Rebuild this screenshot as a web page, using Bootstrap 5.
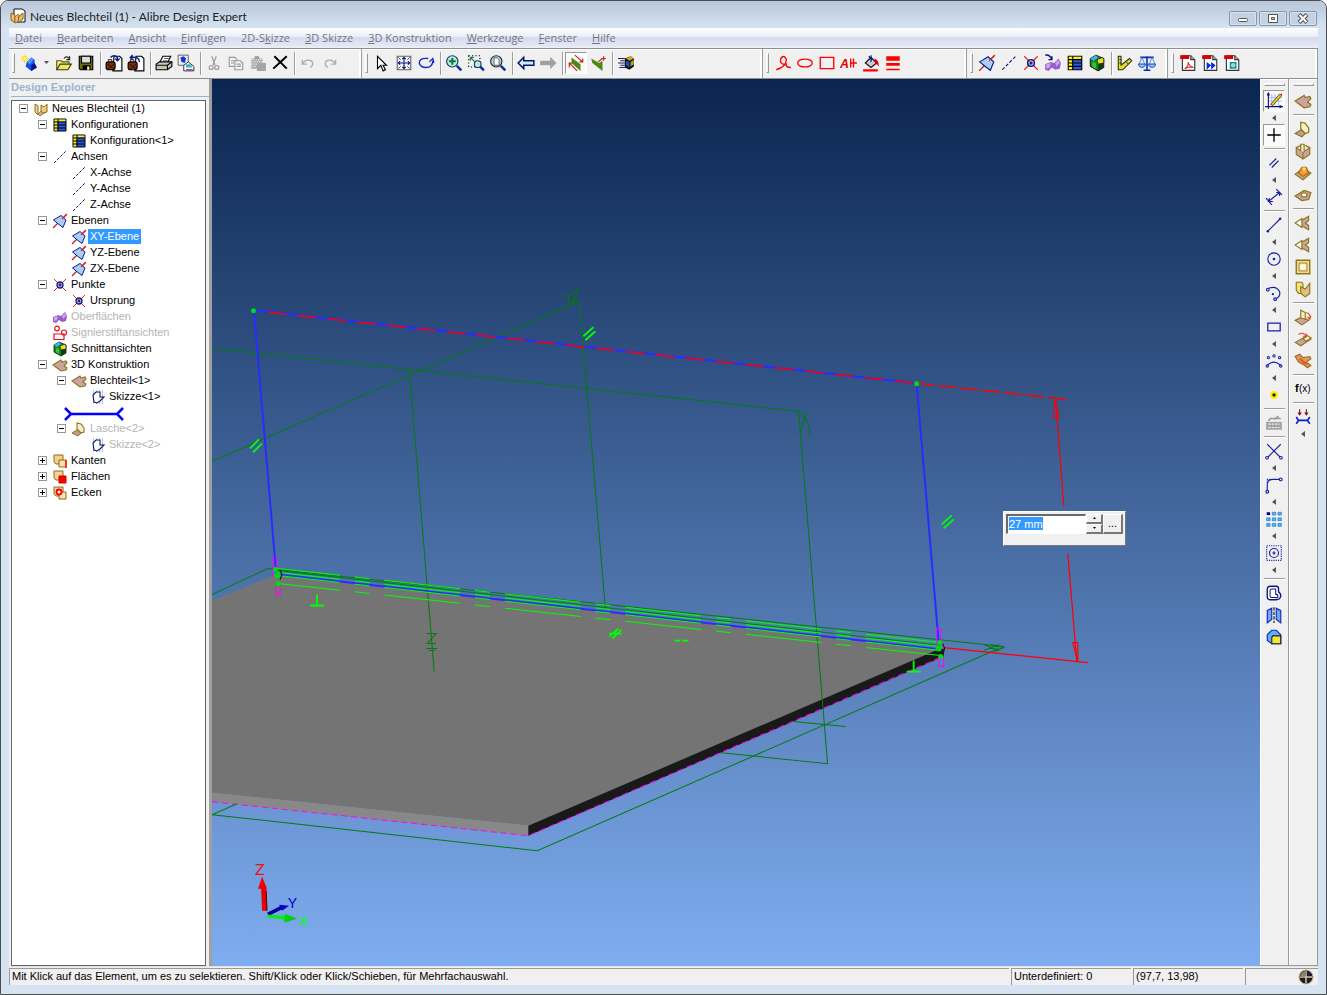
<!DOCTYPE html>
<html lang="de">
<head>
<meta charset="utf-8">
<meta name="viewport" content="width=device-width, initial-scale=1">
<title>Neues Blechteil (1) - Alibre Design Expert</title>
<link href="https://cdn.jsdelivr.net/npm/bootstrap@5.3.0/dist/css/bootstrap.min.css" rel="stylesheet">
<style>
  body { background: #fff; color: #000; font: 11px/16px "Liberation Sans", sans-serif; }
  .window { border: 1px solid #4a4c55; border-radius: 8px 8px 0 0; background: #d6e3f2; padding: 0 8px 9px; overflow: hidden; }
  .titlebar { height: 27px; margin: 0 -8px; padding: 6px 9px 0 9px; gap: 4px; background: linear-gradient(#b8c6d9, #c6d5e5 50%, #d6e3f1); font: 12px/20px Lato, "Open Sans", sans-serif; color: #222; }
  .titlebar > svg { width: 16px; height: 18px; }
  .caption { width: 28px; height: 15px; padding: 0; border: 1px solid #8494ac; border-radius: 2px; background: #c4d1e1; box-shadow: inset 0 0 0 1px #d8e3ef; }
  .caption svg { display: block; margin: auto; width: 14px; height: 11px; }
  .menubar { height: 20px; padding-left: 6px; gap: 15px; background: linear-gradient(#fff, #eceff7 40%, #d5dbef 50%, #e3e8f5 90%, #f0f0f0); font: 11px/20px "Open Sans", sans-serif; }
  .menubar a { color: #74767c; text-decoration: none; }
  .toolbars { height: 31px; background: #f0f0f0; border-top: 1px solid #8e8e8e; border-bottom: 1px solid #8e8e8e; box-shadow: inset 0 1px #fff; }
  .band { padding: 3px 0 3px 9px; border-right: 1px solid #9a9a9a; box-shadow: inset -2px 0 #fff; position: relative; }
  .band::before { content: ""; position: absolute; left: 3px; top: 4px; bottom: 5px; width: 3px; border: 1px solid #fff; border-right-color: #999; border-bottom-color: #999; }
  .tb { width: 22px; height: 22px; padding: 0; border: 0; border-radius: 0; background: none; display: flex; align-items: center; justify-content: center; flex: none; }
  .tb svg { width: 18px; height: 18px; }
  .tb.pressed { background: #fafafa; border: 1px solid #999; border-right-color: #fff; border-bottom-color: #fff; }
  .drop { width: 13px; height: 22px; padding: 0; border: 0; background: none; display: flex; align-items: center; justify-content: center; }
  .drop svg { width: 5px; height: 4px; }
  .divide { width: 6px; flex: none; background: linear-gradient(90deg, transparent 3px, #9c9c9c 3px 4px, #fff 4px 5px, transparent 5px); }
  .explorer { width: 200px; background: #f0f0f0; padding-left: 2px; flex: none; }
  .explorer h2 { margin: 0; width: 198px; height: 18px; font: bold 11px/17px "Liberation Sans", sans-serif; color: #99b4d1; border-bottom: 1px solid #99b4d1; }
  .tree { margin-top: 3px; width: 195px; background: #fff; border: 1px solid #646464; flex: 1; padding-left: 7px; }
  .tree ul { padding-left: 19px; }
  .node { height: 16px; display: flex; align-items: center; white-space: nowrap; }
  .node > svg { width: 18px; height: 16px; margin-left: 4px; flex: none; }
  .node > span { padding: 0 2px; line-height: 15px; height: 15px; }
  .node.off > span { color: #b4b4b4; }
  .node.sel > span { background: #3399ff; color: #fff; }
  .node > i { width: 9px; flex: none; }
  .twist { width: 9px; height: 9px; border: 1px solid #969696; background: linear-gradient(#000, #000) 50% 50% / 5px 1px no-repeat #fff; padding: 0; flex: none; }
  .twist.plus { background: linear-gradient(#000, #000) 50% 50% / 5px 1px no-repeat, linear-gradient(#000, #000) 50% 50% / 1px 5px no-repeat #fff; }
  .splitter { width: 3px; background: #a0a0a0; flex: none; }
  .scene { background: linear-gradient(#0a254f, #80adf0); }
  .scene svg { display: block; }
  .sidebar { width: 29px; background: #f0f0f0; border-right: 1px solid #9a9a9a; border-bottom: 1px solid #9a9a9a; box-shadow: inset 1px 1px #fff; padding-top: 11px; position: relative; flex: none; }
  .sidebar::before { content: ""; position: absolute; left: 4px; right: 3px; top: 4px; height: 3px; border: 1px solid #fff; border-right-color: #999; border-bottom-color: #999; }
  .sidebar .divide { width: 21px; height: 6px; background: linear-gradient(transparent 2px, #9c9c9c 2px 3px, #fff 3px 4px, transparent 4px); }
  .sidebar .drop { width: 22px; height: 12px; }
  .sidebar .drop svg { width: 4px; height: 6px; }
  .dimbox { position: absolute; left: 791px; top: 432px; width: 123px; height: 35px; background: #f0f0f0; border: 1px solid #fff; border-right-color: #777; border-bottom-color: #777; padding: 2px; }
  .dimbox input { width: 80px; height: 20px; border: 1px solid #fff; border-top: 2px solid #696969; border-left: 2px solid #696969; padding: 0 0 0 1px; color: #fff; background: linear-gradient(#3399ff, #3399ff) 1px 1px / 34px 13px no-repeat #fff; font-size: 11px; line-height: 14px; border-radius: 0; }
  .bevel { padding: 0; border: 1px solid #fff; border-right: 2px solid #777; border-bottom: 2px solid #777; background: #f0f0f0; font-size: 11px; line-height: 14px; }
  .spin .bevel { width: 17px; height: 10px; display: flex; align-items: center; justify-content: center; }
  .status { height: 19px; background: #f0f0f0; gap: 2px; padding-top: 1px; border-top: 1px solid #e3e3e3; }
  .pane { border-left: 1px solid #999; border-top: 1px solid #999; padding-left: 2px; line-height: 15px; }
</style>
</head>
<body>
<svg width="0" height="0" class="position-absolute" aria-hidden="true">
  <defs>
  <symbol id="app" viewBox="0 0 16 16"><path d="M4 1h8l3 2v11H6L4 12z" fill="#fff" stroke="#111"/><path d="M1 5l4 2v8l-4-3z" fill="#e8c070" stroke="#8a6418"/><path d="M5 15V9l3-3 1 2v5z" fill="#f3b48c" stroke="#a0601c" stroke-width=".8"/><path d="M9 8l4-3v6l-5 4z" fill="#e9bd66" stroke="#8a6418"/></symbol>
  <symbol id="part" viewBox="0 0 16 16"><path d="M2 3l3 2v9l-3-3z" fill="#f3d590" stroke="#8a6d14"/><path d="M5 13l4-4 4 2-6 4z" fill="#c9a2a2" stroke="#8a6d14" stroke-width=".7"/><path d="M8 4l3 2 3-3v8l-4 1-2-2z" fill="#f3c880" stroke="#8a6d14"/></symbol>
  <symbol id="new" viewBox="0 0 16 16"><path d="M6 7l4-4 3 2v4l2 3-5 3-5-4z" fill="#1450e8"/><path d="M6 7l4-4 2 2-3 4z" fill="#4c96ff"/><path d="M10 10l3-2 2 4-5 3z" fill="#08108c"/><path d="M4 1v7M1 4h7M2 2l4 4M6 2L2 6" stroke="#f5e100"/><circle cx="4" cy="4" r="1.2" fill="#fff79a"/></symbol>
  <symbol id="open" viewBox="0 0 16 16"><path d="M1.500 14V6h4l1 1h6v2" fill="#f7ee8a" stroke="#5b5b08"/><path d="M1.500 14l3-5h10l-3 5z" fill="#eee468" stroke="#3b3b00"/><path d="M8 4q2-3 5 0m0-2v3h-3" fill="none" stroke="#222"/></symbol>
  <symbol id="save" viewBox="0 0 16 16"><path d="M2 2h12v12H3l-1-1z" fill="#6e6a10" stroke="#000"/><path d="M4 2h8v6H4z" fill="#ddd" stroke="#000"/><path d="M5 10h7v4H5z" fill="#000"/><path d="M9 11h2v3H9z" fill="#eee"/></symbol>
  <symbol id="pkgin" viewBox="0 0 16 16"><path d="M8 2h5l2 2v11H7z" fill="#fff" stroke="#000"/><rect x="1" y="7" width="8" height="7" rx="2" fill="#7c2d12" stroke="#000"/><path d="M3 7V5h3v2M2 9l6 4M8 9l-5 4" fill="none" stroke="#2a0c00" stroke-width=".8"/><path d="M5 3q3-3 6 0v3m-2-2l2 2 2-2" fill="none" stroke="#0a1a9c" stroke-width="1.300"/></symbol>
  <symbol id="pkgout" viewBox="0 0 16 16"><path d="M8 2h5l2 2v11H7z" fill="#fff" stroke="#000"/><rect x="1" y="7" width="8" height="7" rx="2" fill="#7c2d12" stroke="#000"/><path d="M3 7V5h3v2M2 9l6 4M8 9l-5 4" fill="none" stroke="#2a0c00" stroke-width=".8"/><path d="M11 7q0-5-8-4m2-2L3 3l2 2" fill="none" stroke="#0a1a9c" stroke-width="1.300"/></symbol>
  <symbol id="print" viewBox="0 0 16 16"><path d="M4 8l3-6h7l-3 6" fill="#fff" stroke="#000"/><path d="M8 4h4M7 6h4" stroke="#555" stroke-width=".8"/><path d="M1 9l3-2h11v4l-4 3H1z" fill="#c9c9c9" stroke="#000"/><path d="M1 10h10v4M11 10l4-3" fill="none" stroke="#000"/><path d="M3 12h6" stroke="#d5c820"/></symbol>
  <symbol id="image" viewBox="0 0 16 16"><path d="M1 1h9v9H1z" fill="#e8f0ff" stroke="#555" stroke-width=".8"/><path d="M3 3l3-1 2 2-1 4-3-1z" fill="#1432d8"/><path d="M6 10l4-3 5 4v4H6z" fill="#fff" stroke="#222" stroke-width=".8"/><path d="M8 9h4l2 3H8z" fill="#41b2bd"/><path d="M8 14h6" stroke="#5a1aa0"/></symbol>
  <symbol id="cut" viewBox="0 0 16 16"><path d="M6 2l3 8M10 2L7 10" stroke="#999" fill="none"/><circle cx="5.500" cy="12" r="1.800" fill="none" stroke="#999"/><circle cx="10.500" cy="12" r="1.800" fill="none" stroke="#999"/></symbol>
  <symbol id="copy" viewBox="0 0 16 16"><g fill="#f4f4f4" stroke="#999"><path d="M2 3h5l2 2v6H2z"/><path d="M7 6h5l2 2v6H7z"/><path d="M3.500 6h4M3.500 8h3M8.500 9h4M8.500 11h4"/></g></symbol>
  <symbol id="paste" viewBox="0 0 16 16"><path d="M2 4h10v9H2z" fill="#aaa"/><path d="M5 2h4v3H5z" fill="#999"/><path d="M7 8h8v7H7z" fill="#a4a4a4"/><path d="M2 5h10M3 7h9M2 9h5M3 11h4" stroke="#eee" stroke-dasharray="1 1"/></symbol>
  <symbol id="del" viewBox="0 0 16 16"><path d="M3 2l11 11M14 2L2 13" stroke="#000" stroke-width="1.800"/></symbol>
  <symbol id="undo" viewBox="0 0 16 16"><path d="M3 5v4h4M3 9q3-5 8-3 3 3-1 6" fill="none" stroke="#aaa" stroke-width="1.200"/></symbol>
  <symbol id="redo" viewBox="0 0 16 16"><path d="M13 5v4H9M13 9Q10 4 5 6q-3 3 1 6" fill="none" stroke="#aaa" stroke-width="1.200"/></symbol>
  <symbol id="arrow" viewBox="0 0 16 16"><path d="M4 2v11l3-3 2 5 2-1-2-4h3z" fill="#fff" stroke="#000"/></symbol>
  <symbol id="pan" viewBox="0 0 16 16"><path d="M2 2h12v12H2z" fill="#f4f4f4" stroke="#666"/><path d="M8 3v10M3 8h10M6.500 4.500L8 3l1.500 1.500M6.500 11.500L8 13l1.500-1.500M4.500 6.500L3 8l1.500 1.500M11.500 6.500L13 8l-1.500 1.500" stroke="#0a1a8c" fill="none"/><path d="M3 3l2 2m6 6l2 2M13 3l-2 2m-6 6l-2 2" stroke="#333" stroke-width=".8"/></symbol>
  <symbol id="rotate" viewBox="0 0 16 16"><path d="M10 4Q2 3 2 8q1 4 6 4 6 0 6-6m-3 1l3-3 1 4" fill="none" stroke="#1428dc" stroke-width="1.200"/></symbol>
  <symbol id="zin" viewBox="0 0 16 16"><circle cx="6.500" cy="6.500" r="5" fill="#bfe8e4" stroke="#123c5c"/><path d="M6.500 3.500v6M3.500 6.500h6" stroke="#087840" stroke-width="1.800"/><path d="M10.500 10.500l4 4" stroke="#0a2ca0" stroke-width="2.200"/></symbol>
  <symbol id="zwin" viewBox="0 0 16 16"><path d="M1.500 1.500h10v10h-10z" fill="none" stroke="#000" stroke-dasharray="1 2"/><path d="M3 3l4 4M3 3h3M3 3v3" stroke="#0a7a3a"/><circle cx="9.500" cy="9" r="3" fill="#bfe8e4" stroke="#123c5c"/><path d="M12 11.500l3 3" stroke="#0a2ca0" stroke-width="2.200"/></symbol>
  <symbol id="zfit" viewBox="0 0 16 16"><circle cx="6.500" cy="6.500" r="5" fill="#b4ddf2" stroke="#222"/><path d="M4.500 3.500h3l1.500 1.500v5H4.500z" fill="#fff" stroke="#555" stroke-width=".8"/><path d="M10.500 10.500l4 4" stroke="#0a2ca0" stroke-width="2.200"/></symbol>
  <symbol id="back" viewBox="0 0 16 16"><path d="M1 8l5-5v3h9v4H6v3z" fill="#c8f0ff" stroke="#0a1466" stroke-width="1.300"/></symbol>
  <symbol id="fwd" viewBox="0 0 16 16"><path d="M15.500 8L10 2.500V6H1v4h9v3.500z" fill="#a0a0a0"/></symbol>
  <symbol id="facea" viewBox="0 0 16 16"><path d="M4 3l8 6v6L4 8z" fill="#4d8a14"/><path d="M7 1l7 6m0-3v3h-3M2 8l7 7m-7-3V8h3" stroke="#c82014" fill="none"/></symbol>
  <symbol id="faceb" viewBox="0 0 16 16"><path d="M2 4l7 4 3-2v9L3 8z" fill="#4d8a14"/><path d="M8 7l4-3M11 4h4M13 2v4" stroke="#c82014"/></symbol>
  <symbol id="shade" viewBox="0 0 16 16"><path d="M7 4l5-2 3 2v7l-4 3-4-2z" fill="#111"/><path d="M8 4l4-2 3 2-4 2z" fill="#c8a824"/><path d="M8 6l3 1v5l-3-2z" fill="#1450c8"/><path d="M12 7l3-2v4l-3 2z" fill="#a8a028"/><path d="M1 4h6M3 6h4M1 8h6M3 10h4M2 12h6" stroke="#14205c"/></symbol>
  <symbol id="pen" viewBox="0 0 16 16"><path d="M2 14q9-3 9-9Q9 0 6 4q-1 4 2 5h3q-1 3 4 3" fill="none" stroke="#f00" stroke-width="1.200"/></symbol>
  <symbol id="ell" viewBox="0 0 16 16"><ellipse cx="8" cy="8" rx="6.500" ry="3.500" fill="none" stroke="#f00" stroke-width="1.200"/></symbol>
  <symbol id="rectr" viewBox="0 0 16 16"><path d="M2 3h12v10H2z" fill="none" stroke="#f00" stroke-width="1.200"/></symbol>
  <symbol id="note" viewBox="0 0 16 16"><text x="0" y="12" font-family="Liberation Sans,sans-serif" font-weight="bold" font-style="italic" font-size="11" fill="#e00000">A</text><path d="M9.500 4v8M12 4v8M9 8h6" stroke="#f00" stroke-width="1.200"/></symbol>
  <symbol id="fill" viewBox="0 0 16 16"><path d="M3 8l5-5 5 5-5 4z" fill="#ccc" stroke="#111"/><path d="M8 1v6M6 2l3 3" stroke="#00128c"/><path d="M11 4q4 1 4 7l-3-3z" fill="#e80000"/><path d="M1 14.500h13" stroke="#f00" stroke-width="2"/></symbol>
  <symbol id="lines" viewBox="0 0 16 16"><path d="M2 2h12v4H2zM2 8h12v2.500H2zM2 13h12v1.500H2z" fill="#f00"/></symbol>
  <symbol id="plane" viewBox="0 0 16 16"><path d="M14.500 1.500L11 5M1 15l5-5" stroke="#c01818" stroke-width="1.100"/><path d="M1.500 7L9 2.500l5 4.500-3 7.500-4-3z" fill="#a8cef2" stroke="#0a1a8c"/><path d="M15 1l-5 5" stroke="#e01818" stroke-width="1.100"/></symbol>
  <symbol id="axis" viewBox="0 0 16 16"><path d="M2 14L14 2" stroke="#00006c" stroke-width=".9" stroke-dasharray="3 1.500"/></symbol>
  <symbol id="point" viewBox="0 0 16 16"><path d="M2 2l12 12M14 2L2 14" stroke="#f02020"/><circle cx="8" cy="8" r="3" fill="#a9bdf0" stroke="#0c1c8c" stroke-width="1.300"/><circle cx="8" cy="8" r="1.400" fill="#601040"/></symbol>
  <symbol id="surf" viewBox="0 0 16 16"><path d="M1 8l5-2 3 1 4-4 2 4-1 5-4 1-3-2-3 3-3-1z" fill="#9a5cc8"/><path d="M2 8l4-1-1 4-3 1zM10 7l3-3 1 3-3 3z" fill="#cda4f0"/></symbol>
  <symbol id="surfadd" viewBox="0 0 16 16"><use href="#surf" y="1"/><path d="M1 1q4-1 6 4M4 5h3V2" fill="none" stroke="#0a147c" stroke-width="1.300"/></symbol>
  <symbol id="conf" viewBox="0 0 16 16"><path d="M2 2h12v12H2z" fill="#2d58e0" stroke="#000"/><path d="M2.500 2.500h3v11h-3zM2.500 2.500h11v2h-11z" fill="#ffee14"/><path d="M2 5h12M2 8h12M2 11h12M6 2v12" stroke="#000"/></symbol>
  <symbol id="section" viewBox="0 0 16 16"><path d="M2 4l5-3 7 3v8l-5 3-7-4z" fill="#168c18" stroke="#111" stroke-width=".8"/><path d="M2 4l5-3 2 2-4 3z" fill="#38b4f4"/><path d="M8 5l5-2 1 2v3l-5 1z" fill="#f0dc28" stroke="#222" stroke-width=".7"/><path d="M9 9v6l5-3V8z" fill="#0c3c14"/><path d="M4 7v4l3 2V8z" fill="#3cc43c"/></symbol>
  <symbol id="angle" viewBox="0 0 16 16"><path d="M2 2h2.500v8L12 4l2 2-8 8H2z" fill="#e8de14" stroke="#222" stroke-width=".9"/><path d="M3 5h2M3 8h2M9 7l2 2" stroke="#222" stroke-width=".8"/></symbol>
  <symbol id="scale" viewBox="0 0 16 16"><path d="M8 2v12M5 14.500h6M2 3h12" stroke="#1028b4" stroke-width="1.400"/><path d="M3.500 3L1 9h5zM12.500 3L10 9h5z" fill="none" stroke="#3a86e0" stroke-width=".8"/><path d="M0 9h7q-1 3-3.500 3T0 9zM9 9h7q-1 3-3.500 3T9 9z" fill="#8cc8f8" stroke="#1848c0" stroke-width=".8"/></symbol>
  <symbol id="page" viewBox="0 0 16 16"><path d="M3 1.500h7.500l3.500 3.500v9.500H3z" fill="#fff" stroke="#333"/><path d="M10.500 1.500V5H14" fill="#bbb" stroke="#333"/><path d="M1 1h8v3.500H1z" fill="#d80000"/></symbol>
  <symbol id="pdf" viewBox="0 0 16 16"><use href="#page"/><path d="M5 13q4-2 3-6 1 4 5 5-4-1-8 1z" fill="none" stroke="#e03030"/></symbol>
  <symbol id="pdf3" viewBox="0 0 16 16"><use href="#page"/><path d="M5 7l4 3-4 4zM9 7l4 3-4 4z" fill="#0a28dc"/></symbol>
  <symbol id="pub" viewBox="0 0 16 16"><use href="#page"/><path d="M6 7h6v6H6z" fill="#148c8c"/><circle cx="9" cy="10" r="2" fill="#9ed8d8"/></symbol>
  <symbol id="signs" viewBox="0 0 16 16"><g fill="none" stroke="#e80c20" stroke-width="1.200"><circle cx="5" cy="3.500" r="2.300"/><circle cx="12" cy="7.500" r="2.500"/><path d="M2 9h10v5.500H2z"/></g></symbol>
  <symbol id="plate" viewBox="0 0 16 16"><path d="M1 8l8-5 1 2 4-1 1 2-3 3 3 2-1 2-5 1z" fill="#cba3a0" stroke="#8c7618" stroke-width="1.100"/></symbol>
  <symbol id="sk" viewBox="0 0 16 16"><path d="M3 2h12M3 4h12M3 6h12M3 8h12M3 10h12M3 12h12M3 14h12" stroke="#2a78c8" stroke-width=".8" stroke-dasharray="1 2"/><path d="M3 6l3-3h4v5h4l-4 4-3 2-3-1z" fill="#fff" stroke="#0c1466" stroke-width="1.100"/></symbol>
  <symbol id="tab" viewBox="0 0 16 16"><path d="M1 12l5-3 6 1-5 5z" fill="#c59a96" stroke="#8c7618"/><path d="M6 8V2l4 1 3 4v4l-3 1z" fill="#f6efc8" stroke="#8c7618" stroke-width="1.100"/></symbol>
  <symbol id="edge" viewBox="0 0 16 16"><path d="M2 2h9v9H4L2 9z" fill="#f6cf96" stroke="#8c6c10"/><path d="M7 7h7v7H7z" fill="#f9dfb4" stroke="#8c6c10"/><path d="M14 7v8" stroke="#f00" stroke-width="1.400"/></symbol>
  <symbol id="face" viewBox="0 0 16 16"><path d="M2 2h9v9H4L2 9z" fill="#f6cf96" stroke="#8c6c10"/><path d="M7 7h7v7H7z" fill="#f00" stroke="#c00"/></symbol>
  <symbol id="corner" viewBox="0 0 16 16"><path d="M2 2h9v9H4L2 9z" fill="#f6cf96" stroke="#8c6c10"/><path d="M7 7h7v7H7z" fill="#f9dfb4" stroke="#8c6c10"/><circle cx="7" cy="7" r="2.500" fill="#fff" stroke="#f00" stroke-width="1.800"/></symbol>
  <symbol id="gridp" viewBox="0 0 16 16"><path d="M6 2v10M9 2v10M12 2v10M3 5h12M3 8h12" stroke="#a9c4ec"/><path d="M3 1v14M0 13h16M2 3l1-2 1 2M13 12l2 1-2 1" stroke="#0c1476" fill="none"/><path d="M5 11l8-9 2 1-8 9z" fill="#f6cc14" stroke="#333" stroke-width=".7"/><path d="M13 2l2-1v2z" fill="#e02020"/></symbol>
  <symbol id="plus" viewBox="0 0 16 16"><path d="M8 2v12M2 8h12" stroke="#000" stroke-width="1.200"/></symbol>
  <symbol id="par" viewBox="0 0 16 16"><path d="M4 10l6-6M6 12l6-6" stroke="#1420a0"/></symbol>
  <symbol id="dim" viewBox="0 0 16 16"><path d="M1 9l5 6M10 1l5 5M3 12L13 4m-9 5l-1 3h4M10 4h3v3" fill="none" stroke="#1420a0"/></symbol>
  <symbol id="line" viewBox="0 0 16 16"><path d="M2 14L14 2" stroke="#1420a0"/><circle cx="2.500" cy="13.500" r="1.100" fill="#1420a0"/><circle cx="13.500" cy="2.500" r="1.100" fill="#1420a0"/></symbol>
  <symbol id="circ" viewBox="0 0 16 16"><circle cx="8" cy="8" r="5.500" fill="none" stroke="#1420a0"/><circle cx="8" cy="8" r="1.200" fill="#1420a0"/></symbol>
  <symbol id="arc" viewBox="0 0 16 16"><path d="M3 4q7-3 10 3 1 4-3 6" fill="none" stroke="#1420a0"/><circle cx="2.500" cy="5" r="1.200" fill="none" stroke="#1420a0"/><circle cx="9" cy="13.500" r="1.200" fill="none" stroke="#1420a0"/><circle cx="7" cy="9" r="1" fill="#1420a0"/></symbol>
  <symbol id="rectb" viewBox="0 0 16 16"><path d="M2.500 4.500h11v7h-11z" fill="none" stroke="#1420a0" stroke-width="1.100"/></symbol>
  <symbol id="spl" viewBox="0 0 16 16"><path d="M2 12q6-6 12 0" fill="none" stroke="#1420a0"/><g fill="none" stroke="#1420a0" stroke-width=".9"><circle cx="2" cy="12.500" r="1.100"/><circle cx="14" cy="12.500" r="1.100"/><circle cx="3" cy="5" r="1"/><circle cx="8" cy="3.500" r="1"/><circle cx="13" cy="5" r="1"/></g></symbol>
  <symbol id="pt" viewBox="0 0 16 16"><circle cx="8" cy="8" r="2.500" fill="#222" stroke="#ffee00" stroke-width="2"/></symbol>
  <symbol id="keys" viewBox="0 0 16 16"><path d="M1 7h14v7H1z" fill="#a5a5a5"/><path d="M3 6l2-2h9M8 5l4-3" stroke="#999" fill="none" stroke-width="1.500"/><path d="M3 9h10M3 12h10" stroke="#eee" stroke-dasharray="2 1"/></symbol>
  <symbol id="trim" viewBox="0 0 16 16"><path d="M2 2l12 12M14 2L2 14" stroke="#1420a0"/><g fill="#fff" stroke="#1420a0" stroke-width=".9"><circle cx="1.800" cy="14" r="1.200"/><circle cx="14.200" cy="14" r="1.200"/></g></symbol>
  <symbol id="fil" viewBox="0 0 16 16"><path d="M2 14V8q0-5 5-5h7" fill="none" stroke="#1420a0"/><path d="M2 3h3M2 3v4" stroke="#1420a0" stroke-dasharray="1 1"/><circle cx="14" cy="3" r="1.200" fill="#fff" stroke="#1420a0"/><circle cx="2" cy="14" r="1.200" fill="#fff" stroke="#1420a0"/></symbol>
  <symbol id="pat" viewBox="0 0 16 16"><g fill="#5cb0f0" stroke="#1878c8" stroke-width=".6"><path d="M6.500 2h3v2.500h-3zM11.500 2h3v2.500h-3zM1.500 7h3v2.500h-3zM6.500 7h3v2.500h-3zM11.500 7h3v2.500h-3zM1.500 12h3v2.500h-3zM6.500 12h3v2.500h-3zM11.500 12h3v2.500h-3z"/></g><path d="M1.500 2h3v2.500h-3z" fill="#00007c"/></symbol>
  <symbol id="cpat" viewBox="0 0 16 16"><path d="M1.500 1.500h13v13h-13z" fill="none" stroke="#1420a0" stroke-dasharray="1 1"/><circle cx="8" cy="8" r="4" fill="none" stroke="#1420a0"/><path d="M8 6.500v3M6.500 8h3" stroke="#1420a0"/></symbol>
  <symbol id="off" viewBox="0 0 16 16"><path d="M5 2h5q2 0 2 2v3q2 1 2 4-1 3-4 3H5q-3 0-3-3V5q0-3 3-3z" fill="#fff" stroke="#0c1480" stroke-width="1.200"/><path d="M6 4.500h3.500V9q2 0 2 2t-2 1H6q-1.500 0-1.500-1.500V6q0-1.500 1.500-1.500z" fill="none" stroke="#0c1480" stroke-width=".9"/></symbol>
  <symbol id="mir" viewBox="0 0 16 16"><path d="M2 4l4-2v10l-4 3zM14 4l-4-2v10l4 3z" fill="#6ca8f8" stroke="#1428b8"/><path d="M8 1v14" stroke="#111" stroke-dasharray="3 1"/></symbol>
  <symbol id="proj" viewBox="0 0 16 16"><path d="M2 6l4-4h4l4 4v8H6l-4-3z" fill="#60b0f8" stroke="#1428b8"/><path d="M6 9q0-3 4-2h4v7H6z" fill="#f2e43c" stroke="#222"/></symbol>
  <symbol id="flange" viewBox="0 0 16 16"><path d="M2 5l6 4v6l-6-4zM14 5L8 9v6l6-4z" fill="#cba39c" stroke="#8c7618"/><path d="M2 5l4-2v5M10 3l4 2" fill="none" stroke="#8c7618"/><path d="M6 8V2h3v7" fill="#f6efc8" stroke="#8c7618"/></symbol>
  <symbol id="dimple" viewBox="0 0 16 16"><path d="M1 9l7-5 7 4-7 6z" fill="#cba39c" stroke="#8c7618"/><path d="M4 8l3-5h4l2 5-5 3z" fill="#f69c28" stroke="#a86410"/><path d="M7 3h4l-2 4z" fill="#ffd878"/></symbol>
  <symbol id="hole" viewBox="0 0 16 16"><path d="M1 9l8-5 6 2-2 6-6 1z" fill="#cba39c" stroke="#8c7618" stroke-width="1.100"/><ellipse cx="9" cy="8" rx="2.500" ry="1.800" fill="#fff" stroke="#8c7618"/></symbol>
  <symbol id="cutp" viewBox="0 0 16 16"><path d="M6 6l7-4v4l-3 2 3 2v4l-7-4z" fill="#cba39c" stroke="#8c7618"/><path d="M1 8l6-4v8z" fill="#fff" stroke="#8c7618"/></symbol>
  <symbol id="conv" viewBox="0 0 16 16"><path d="M2 2h12v12H2z" fill="#f6d890" stroke="#8c7618" stroke-width="1.200"/><path d="M4.500 4.500h7v7h-7z" fill="#fbe8b8" stroke="#8c7618" stroke-width=".7"/><circle cx="8" cy="8" r="2.500" fill="#fffbe8"/></symbol>
  <symbol id="bent" viewBox="0 0 16 16"><path d="M2 2h5l1 2v8H4l-2-3z" fill="#f3e26c" stroke="#8c7618"/><path d="M6 6l4 2 4-5v9l-4 3-4-3z" fill="#e2bd86" stroke="#8c7618"/></symbol>
  <symbol id="fold" viewBox="0 0 16 16"><path d="M1 11l6-3 6 3-6 4z" fill="#cba39c" stroke="#8c7618"/><path d="M6 9V2l4 2v6z" fill="#f6efc8" stroke="#8c7618"/><path d="M11 4q4 1 3 6l-2-2m2 2l1-3" fill="none" stroke="#e84818"/></symbol>
  <symbol id="unfold" viewBox="0 0 16 16"><path d="M1 11l9-5 5 2-9 6z" fill="#cba39c" stroke="#8c7618"/><path d="M8 8l4-3 3 2-4 3z" fill="#f6efc8" stroke="#8c7618"/><path d="M4 4q4-3 7 2M11 3v3H8" fill="none" stroke="#e84818"/></symbol>
  <symbol id="ref" viewBox="0 0 16 16"><path d="M1 4l4-2 3 3 6-1 1 2-4 3 4 3-3 2-4-3-4-2z" fill="#d89868" stroke="#a86c18"/><path d="M5 6l6 5" stroke="#e85818" stroke-width="2"/></symbol>
  <symbol id="fx" viewBox="0 0 18 18"><text x="1" y="12" font-family="Liberation Sans,sans-serif" font-weight="bold" font-size="11">f</text><text x="5" y="12" font-family="Liberation Sans,sans-serif" font-size="10">(x)</text></symbol>
  <symbol id="dog" viewBox="0 0 16 16"><path d="M5 1v5M3.500 4L5 6l1.500-2M11 1v5M9.500 4L11 6l1.500-2" stroke="#8c0c10" fill="none"/><path d="M2 8l2 3-2 3M14 8l-2 3 2 3M4 11h8" fill="none" stroke="#0c1cc8" stroke-width="1.500"/></symbol>
  <symbol id="tri" viewBox="0 0 4 6"><path d="M4 0v6L0 3z" fill="#555"/></symbol>
  </defs>
</svg>

<div class="window vh-100 d-flex flex-column">
  <header class="titlebar d-flex align-items-start">
    <svg><use href="#app"/></svg>
    <span class="me-auto">Neues Blechteil (1) - Alibre Design Expert</span>
    <div class="d-flex mt-1" style="gap:2px">
      <button class="caption" aria-label="Minimieren"><svg viewBox="0 0 14 11"><rect x="2.500" y="5.500" width="9" height="3" rx="1" fill="#fff" stroke="#555"/></svg></button>
      <button class="caption" aria-label="Wiederherstellen"><svg viewBox="0 0 14 11"><path d="M2.500 1.500h9v8h-9z" fill="#fff" stroke="#555"/><path d="M5.500 4.500h3v2h-3z" fill="#ccd8e6" stroke="#555"/></svg></button>
      <button class="caption" aria-label="Schließen"><svg viewBox="0 0 14 11"><path d="M3 1.500l8 8M11 1.500l-8 8" stroke="#555" stroke-width="4"/><path d="M3.500 2l7 7M10.500 2l-7 7" stroke="#fff" stroke-width="2"/></svg></button>
    </div>
  </header>
  <nav class="menubar d-flex">
    <a href="#"><u>D</u>atei</a><a href="#"><u>B</u>earbeiten</a><a href="#"><u>A</u>nsicht</a><a href="#"><u>E</u>infügen</a><a href="#">2D-S<u>k</u>izze</a><a href="#"><u>3</u>D Skizze</a><a href="#"><u>3</u>D Konstruktion</a><a href="#"><u>W</u>erkzeuge</a><a href="#"><u>F</u>enster</a><a href="#"><u>H</u>ilfe</a>
  </nav>
  <div class="toolbars d-flex">
    <div class="band d-flex" style="flex:0 1 353px">
      <button class="tb" aria-label="Neu"><svg><use href="#new"/></svg></button>
      <button class="drop" aria-label="Neu, Auswahl"><svg viewBox="0 0 5 4"><path d="M0 0h5L2.500 3z" fill="#555"/></svg></button>
      <button class="tb" aria-label="Öffnen"><svg><use href="#open"/></svg></button>
      <button class="tb" aria-label="Speichern"><svg><use href="#save"/></svg></button>
      <span class="divide"></span>
      <button class="tb" aria-label="Paket einchecken"><svg><use href="#pkgin"/></svg></button>
      <button class="tb" aria-label="Paket auschecken"><svg><use href="#pkgout"/></svg></button>
      <span class="divide"></span>
      <button class="tb" aria-label="Drucken"><svg><use href="#print"/></svg></button>
      <button class="tb" aria-label="Bild"><svg><use href="#image"/></svg></button>
      <span class="divide"></span>
      <button class="tb" aria-label="Ausschneiden"><svg><use href="#cut"/></svg></button>
      <button class="tb" aria-label="Kopieren"><svg><use href="#copy"/></svg></button>
      <button class="tb" aria-label="Einfügen"><svg><use href="#paste"/></svg></button>
      <button class="tb" aria-label="Löschen"><svg><use href="#del"/></svg></button>
      <span class="divide"></span>
      <button class="tb" aria-label="Rückgängig"><svg><use href="#undo"/></svg></button>
      <button class="tb" aria-label="Wiederholen"><svg><use href="#redo"/></svg></button>
    </div>
    <div class="band d-flex" style="flex:0 1 401px">
      <button class="tb" aria-label="Auswählen"><svg><use href="#arrow"/></svg></button>
      <button class="tb" aria-label="Verschieben"><svg><use href="#pan"/></svg></button>
      <button class="tb" aria-label="Drehen"><svg><use href="#rotate"/></svg></button>
      <span class="divide"></span>
      <button class="tb" aria-label="Zoom"><svg><use href="#zin"/></svg></button>
      <button class="tb" aria-label="Zoom Fenster"><svg><use href="#zwin"/></svg></button>
      <button class="tb" aria-label="Zoom alles"><svg><use href="#zfit"/></svg></button>
      <span class="divide"></span>
      <button class="tb" aria-label="Vorherige Ansicht"><svg><use href="#back"/></svg></button>
      <button class="tb" aria-label="Nächste Ansicht"><svg><use href="#fwd"/></svg></button>
      <span class="divide"></span>
      <button class="tb pressed" aria-label="Orientierung"><svg><use href="#facea"/></svg></button>
      <button class="tb" aria-label="Ausrichten"><svg><use href="#faceb"/></svg></button>
      <span class="divide"></span>
      <button class="tb" aria-label="Schattierung"><svg><use href="#shade"/></svg></button>
    </div>
    <div class="band d-flex" style="flex:0 1 204px">
      <button class="tb" aria-label="Stift"><svg><use href="#pen"/></svg></button>
      <button class="tb" aria-label="Ellipse"><svg><use href="#ell"/></svg></button>
      <button class="tb" aria-label="Rechteck"><svg><use href="#rectr"/></svg></button>
      <button class="tb" aria-label="Notiz"><svg><use href="#note"/></svg></button>
      <button class="tb" aria-label="Farbe"><svg><use href="#fill"/></svg></button>
      <button class="tb" aria-label="Linienstärke"><svg><use href="#lines"/></svg></button>
    </div>
    <div class="band d-flex" style="flex:0 1 201px">
      <button class="tb" aria-label="Ebene"><svg><use href="#plane"/></svg></button>
      <button class="tb" aria-label="Achse"><svg><use href="#axis"/></svg></button>
      <button class="tb" aria-label="Punkt"><svg><use href="#point"/></svg></button>
      <button class="tb" aria-label="Oberfläche"><svg><use href="#surfadd"/></svg></button>
      <button class="tb" aria-label="Konfiguration"><svg><use href="#conf"/></svg></button>
      <button class="tb" aria-label="Schnittansicht"><svg><use href="#section"/></svg></button>
      <span class="divide"></span>
      <button class="tb" aria-label="Messen"><svg><use href="#angle"/></svg></button>
      <button class="tb" aria-label="Masse"><svg><use href="#scale"/></svg></button>
    </div>
    <div class="band d-flex flex-fill">
      <button class="tb" aria-label="PDF"><svg><use href="#pdf"/></svg></button>
      <button class="tb" aria-label="3D PDF"><svg><use href="#pdf3"/></svg></button>
      <button class="tb" aria-label="Veröffentlichen"><svg><use href="#pub"/></svg></button>
    </div>
  </div>

  <main class="d-flex flex-fill" style="min-height:0">
    <aside class="explorer d-flex flex-column">
      <h2>Design Explorer</h2>
      <div class="tree">
        <div class="node"><button class="twist" aria-label="Zuklappen"></button><svg><use href="#part"/></svg><span>Neues Blechteil (1)</span></div>
        <ul class="list-unstyled mb-0">
          <li><div class="node"><button class="twist" aria-label="Zuklappen"></button><svg><use href="#conf"/></svg><span>Konfigurationen</span></div>
            <ul class="list-unstyled"><li class="node"><i></i><svg><use href="#conf"/></svg><span>Konfiguration&lt;1&gt;</span></li></ul></li>
          <li><div class="node"><button class="twist" aria-label="Zuklappen"></button><svg><use href="#axis"/></svg><span>Achsen</span></div>
            <ul class="list-unstyled"><li class="node"><i></i><svg><use href="#axis"/></svg><span>X-Achse</span></li>
            <li class="node"><i></i><svg><use href="#axis"/></svg><span>Y-Achse</span></li>
            <li class="node"><i></i><svg><use href="#axis"/></svg><span>Z-Achse</span></li></ul></li>
          <li><div class="node"><button class="twist" aria-label="Zuklappen"></button><svg><use href="#plane"/></svg><span>Ebenen</span></div>
            <ul class="list-unstyled"><li class="node sel"><i></i><svg><use href="#plane"/></svg><span>XY-Ebene</span></li>
            <li class="node"><i></i><svg><use href="#plane"/></svg><span>YZ-Ebene</span></li>
            <li class="node"><i></i><svg><use href="#plane"/></svg><span>ZX-Ebene</span></li></ul></li>
          <li><div class="node"><button class="twist" aria-label="Zuklappen"></button><svg><use href="#point"/></svg><span>Punkte</span></div>
            <ul class="list-unstyled"><li class="node"><i></i><svg><use href="#point"/></svg><span>Ursprung</span></li></ul></li>
          <li class="node off"><i></i><svg><use href="#surf"/></svg><span>Oberflächen</span></li>
          <li class="node off"><i></i><svg><use href="#signs"/></svg><span>Signierstiftansichten</span></li>
          <li class="node"><i></i><svg><use href="#section"/></svg><span>Schnittansichten</span></li>
          <li><div class="node"><button class="twist" aria-label="Zuklappen"></button><svg><use href="#plate"/></svg><span>3D Konstruktion</span></div>
            <ul class="list-unstyled">
              <li><div class="node"><button class="twist" aria-label="Zuklappen"></button><svg><use href="#plate"/></svg><span>Blechteil&lt;1&gt;</span></div>
                <ul class="list-unstyled"><li class="node"><i></i><svg><use href="#sk"/></svg><span>Skizze&lt;1&gt;</span></li></ul></li>
            </ul></li>
        </ul>
        <svg class="d-block" width="150" height="16" viewBox="19 0 150 16"><path d="M65 3l6 6-6 6M123 3l-6 6 6 6M71 9h46" stroke="#0000ff" stroke-width="2.500" fill="none"/></svg>
        <ul class="list-unstyled mb-0">
          <li><ul class="list-unstyled">
            <li><div class="node off"><button class="twist" aria-label="Zuklappen"></button><svg><use href="#tab"/></svg><span>Lasche&lt;2&gt;</span></div>
              <ul class="list-unstyled"><li class="node off"><i></i><svg><use href="#sk"/></svg><span>Skizze&lt;2&gt;</span></li></ul></li>
          </ul></li>
          <li class="node"><button class="twist plus" aria-label="Aufklappen"></button><svg><use href="#edge"/></svg><span>Kanten</span></li>
          <li class="node"><button class="twist plus" aria-label="Aufklappen"></button><svg><use href="#face"/></svg><span>Flächen</span></li>
          <li class="node"><button class="twist plus" aria-label="Aufklappen"></button><svg><use href="#corner"/></svg><span>Ecken</span></li>
        </ul>
      </div>
    </aside>
    <div class="splitter"></div>

    <section class="scene flex-fill position-relative overflow-hidden">
      <svg class="w-100 h-100" viewBox="212 79 1047 887" preserveAspectRatio="xMinYMin slice" fill="none" font-family="Lato, sans-serif">
        <!-- sheet metal plate -->
        <path d="M212 600L274 575L280 574L940 649L529 825L212 792z" fill="#747474"/>
        <path d="M212 792L529 825v10L212 801z" fill="#888"/>
        <path d="M528 825L935 650l8-2v8L528 835z" fill="#191919"/>
        <path d="M212 801L528 835L942 656" stroke="#ff00ff" stroke-dasharray="6 4"/>
        <!-- reference planes -->
        <g stroke="#007d0a">
          <path d="M212 348L798 411L827 763L720 752M793 721l52 5"/>
          <path d="M212 461L579 301L605 608M409 368l25 303"/>
          <path d="M212 594L268 568L1003 646M998 648L537 850L212 814l25-11"/>
          <path d="M278 570L940 645"/>
          <path d="M568 305q-2-10 10-16l-2 6-6 9M563 293l5 4M572 305l3-7"/>
          <path d="M799 412q12 10 10 24M806 413l-7 21"/>
          <path d="M426 633h10l-9 10h9M426 648h11M429 650h6"/>
          <path d="M983 644l15 6M998 644l-15 6M990 644l13 3-9 4"/>
        </g>
        <!-- sketch -->
        <path d="M278 574L940 649" stroke="#2a2cff" stroke-width="2"/>
        <g stroke="#00ff00" stroke-dasharray="76 15 15 15" stroke-dashoffset="14">
          <path d="M278 568L940 642"/><path d="M278 572L940 646"/><path d="M278 575L940 650"/><path d="M278 583L940 655"/>
        </g>
        <path d="M254 311L276 572M916 384l22 258" stroke="#2a2cff" stroke-width="2"/>
        <path d="M254 310L916 383" stroke="#2a2cff" stroke-width="2"/>
        <path d="M268 312L916 383" stroke="#ff0000" stroke-dasharray="18 12" stroke-width="1.500"/>
        <path d="M916 383L1065 399" stroke="#ff0000" stroke-width="1.500" stroke-dasharray="18 4"/>
        <g stroke="#ff0000" stroke-width="1.200">
          <path d="M1055 400l8 106M1067 553l9 108M943 647l144 15"/>
          <path d="M1054 400l-1 17h5zM1072 642h5v19z"/>
        </g>
        <g stroke="#ff00ff"><path d="M273 556v22M277 556v22M276 586v10M280 586v10M276 593h4M936 628h4v20h-4zM938 657v9h5v-9"/></g>
        <path d="M280 570l2 4-2 5M942 643l2 5-2 6" stroke="#2a0808"/>
        <g fill="#00dc14"><circle cx="253.500" cy="310.500" r="2.500"/><circle cx="916" cy="383.500" r="2.500"/><circle cx="275.500" cy="569" r="2.500"/><circle cx="277" cy="575" r="3"/><circle cx="278" cy="583" r="2.500"/><circle cx="939" cy="642" r="2.500"/><circle cx="938" cy="648" r="3"/><circle cx="940" cy="656" r="2.500"/></g>
        <g stroke="#00ff00" stroke-width="1.800">
          <path d="M250 448l9-9M253 452l9-9M583 336l10-9M585 340l10-9M941 524l10-9M943 528l10-9M609 636l9-8M612 638l9-9M609 633h12"/>
          <path d="M317 594v11M310 605h14M913 660v11M906 671h14M674 640h6M682 640h6"/>
        </g>
        <!-- view triad -->
        <g>
          <path d="M261 885h5l1 25h-5z" fill="#e80000"/><path d="M262 876l5 12h-9z" fill="#f00000"/><path d="M266 890l1 20" stroke="#500"/>
          <path d="M267 912l14-7 2 3-14 7z" fill="#0000a0"/><path d="M279 904l10 1-7 5z" fill="#0000d8"/>
          <path d="M267 914l19 1v4l-18-2z" fill="#00f010"/><path d="M285 913l12 5-13 4z" fill="#00d010"/>
        </g>
        <g font-size="16">
          <text x="255" y="874" fill="#f01010">Z</text><text x="288" y="907" font-size="14" fill="#0000e0">Y</text><text x="299" y="925" font-size="14" fill="#00ff10">X</text>
        </g>
      </svg>
      <div class="dimbox d-flex align-items-start">
        <input type="text" value="27 mm" aria-label="Abmessung">
        <div class="spin"><button class="bevel" aria-label="Erhöhen"><svg width="3" height="2"><path d="M0 2h3L1.500 0z"/></svg></button><button class="bevel" aria-label="Verringern"><svg width="3" height="2"><path d="M0 0h3L1.500 2z"/></svg></button></div>
        <button class="bevel" style="width:20px;height:20px" aria-label="Mehr">...</button>
      </div>
    </section>

    <div class="sidebar d-flex flex-column align-items-center" role="toolbar" aria-label="Skizze">
      <button class="tb pressed" aria-label="Skizze aktivieren"><svg><use href="#gridp"/></svg></button><button class="drop" aria-label="Mehr"><svg><use href="#tri"/></svg></button>
      <button class="tb pressed" aria-label="Fadenkreuz"><svg><use href="#plus"/></svg></button><span class="divide"></span>
      <button class="tb" aria-label="Bedingung"><svg><use href="#par"/></svg></button><button class="drop" aria-label="Mehr"><svg><use href="#tri"/></svg></button>
      <button class="tb" aria-label="Bemaßung"><svg><use href="#dim"/></svg></button><span class="divide"></span>
      <button class="tb" aria-label="Linie"><svg><use href="#line"/></svg></button><button class="drop" aria-label="Mehr"><svg><use href="#tri"/></svg></button>
      <button class="tb" aria-label="Kreis"><svg><use href="#circ"/></svg></button><button class="drop" aria-label="Mehr"><svg><use href="#tri"/></svg></button>
      <button class="tb" aria-label="Bogen"><svg><use href="#arc"/></svg></button><button class="drop" aria-label="Mehr"><svg><use href="#tri"/></svg></button>
      <button class="tb" aria-label="Rechteck"><svg><use href="#rectb"/></svg></button><button class="drop" aria-label="Mehr"><svg><use href="#tri"/></svg></button>
      <button class="tb" aria-label="Spline"><svg><use href="#spl"/></svg></button><button class="drop" aria-label="Mehr"><svg><use href="#tri"/></svg></button>
      <button class="tb" aria-label="Punkt"><svg><use href="#pt"/></svg></button><span class="divide"></span>
      <button class="tb" aria-label="Tastatur"><svg><use href="#keys"/></svg></button><span class="divide"></span>
      <button class="tb" aria-label="Trimmen"><svg><use href="#trim"/></svg></button><button class="drop" aria-label="Mehr"><svg><use href="#tri"/></svg></button>
      <button class="tb" aria-label="Abrunden"><svg><use href="#fil"/></svg></button><button class="drop" aria-label="Mehr"><svg><use href="#tri"/></svg></button>
      <button class="tb" aria-label="Muster"><svg><use href="#pat"/></svg></button><button class="drop" aria-label="Mehr"><svg><use href="#tri"/></svg></button>
      <button class="tb" aria-label="Kreismuster"><svg><use href="#cpat"/></svg></button><button class="drop" aria-label="Mehr"><svg><use href="#tri"/></svg></button>
      <span class="divide"></span>
      <button class="tb" aria-label="Versatz"><svg><use href="#off"/></svg></button>
      <button class="tb" aria-label="Spiegeln"><svg><use href="#mir"/></svg></button>
      <button class="tb" aria-label="Projizieren"><svg><use href="#proj"/></svg></button>
    </div>
    <div class="sidebar d-flex flex-column align-items-center" role="toolbar" aria-label="Blech">
      <button class="tb" aria-label="Blechteil"><svg><use href="#plate"/></svg></button><span class="divide"></span>
      <button class="tb" aria-label="Lasche"><svg><use href="#tab"/></svg></button>
      <button class="tb" aria-label="Ecke"><svg><use href="#flange"/></svg></button>
      <button class="tb" aria-label="Sicke"><svg><use href="#dimple"/></svg></button>
      <button class="tb" aria-label="Loch"><svg><use href="#hole"/></svg></button><span class="divide"></span>
      <button class="tb" aria-label="Ausschnitt"><svg><use href="#cutp"/></svg></button>
      <button class="tb" aria-label="Eckschnitt"><svg><use href="#cutp"/></svg></button>
      <button class="tb" aria-label="Stanzen"><svg><use href="#conv"/></svg></button>
      <button class="tb" aria-label="Biegung"><svg><use href="#bent"/></svg></button><span class="divide"></span>
      <button class="tb" aria-label="Falten"><svg><use href="#fold"/></svg></button>
      <button class="tb" aria-label="Abwickeln"><svg><use href="#unfold"/></svg></button>
      <button class="tb" aria-label="Rückbiegen"><svg><use href="#ref"/></svg></button><span class="divide"></span>
      <button class="tb" aria-label="Gleichungseditor"><svg><use href="#fx"/></svg></button><span class="divide"></span>
      <button class="tb" aria-label="Rückschritt"><svg><use href="#dog"/></svg></button><button class="drop" aria-label="Mehr"><svg><use href="#tri"/></svg></button>
    </div>
  </main>

  <footer class="status d-flex">
    <div class="pane flex-fill">Mit Klick auf das Element, um es zu selektieren. Shift/Klick oder Klick/Schieben, für Mehrfachauswahl.</div>
    <div class="pane" style="flex:0 0 120px">Unterdefiniert: 0</div>
    <div class="pane" style="flex:0 0 110px">(97,7, 13,98)</div>
    <div class="pane text-end pe-1" style="flex:0 0 73px"><svg width="16" height="16" viewBox="0 0 16 16" class="d-block ms-auto"><circle cx="8" cy="8" r="7" fill="#1e1a38" stroke="#c8b878"/><path d="M2 8h12M8 2v12" stroke="#d8c890" stroke-width="1.500"/><path d="M8 2a6 6 0 0 0-6 6l6-1z" fill="#8c826c"/></svg></div>
  </footer>
</div>
<script src="https://cdn.jsdelivr.net/npm/bootstrap@5.3.0/dist/js/bootstrap.bundle.min.js"></script>
</body>
</html>
